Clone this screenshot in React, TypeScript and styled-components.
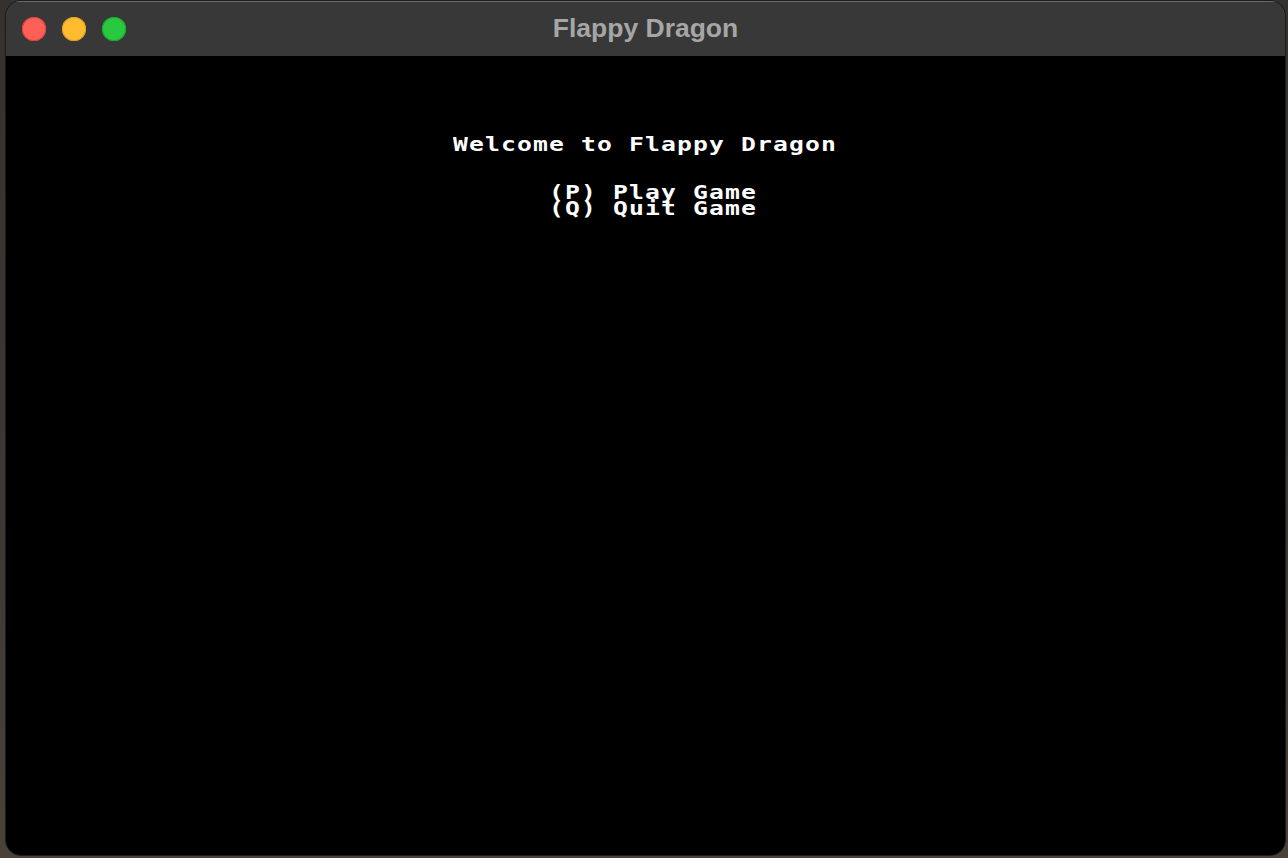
import React from "react";
import styled, { createGlobalStyle } from "styled-components";

const Global = createGlobalStyle`
  html, body { margin: 0; padding: 0; background: #3a3632; }
  #root { width: 1288px; height: 858px; }
`;

const Desktop = styled.div`
  width: 1288px;
  height: 858px;
  box-sizing: border-box;
  padding: 0 2px 2px 5px;
  background: linear-gradient(180deg, #34312e 0%, #3d3833 60%, #4a4238 100%);
  display: flex;
`;

const Window = styled.div`
  flex: 1;
  display: flex;
  flex-direction: column;
  border-radius: 16px;
  overflow: hidden;
  border: 1px solid #1c1c1c;
  box-shadow: inset 0 0 0 1px #5c5c5c;
  background: #000;
`;

const TitleBar = styled.div`
  height: 55px;
  flex: none;
  position: relative;
  display: flex;
  align-items: center;
  justify-content: center;
  background: #383838;
  border-top: 1px solid #6a6a6a;
  box-sizing: border-box;
`;

const Lights = styled.div`
  position: absolute;
  left: 16px;
  top: 15px;
  display: flex;
  gap: 16px;
`;

const Light = styled.span<{ $c: string; $edge: string }>`
  width: 24px;
  height: 24px;
  border-radius: 50%;
  background: ${(p) => p.$c};
  box-shadow: inset 0 0 0 1px ${(p) => p.$edge};
`;

const Title = styled.div`
  font-family: "Liberation Sans", Arial, sans-serif;
  font-weight: 700;
  font-size: 26.5px;
  color: #a6a6a6;
  margin-left: 0;
  margin-top: -2px;
`;

const Console = styled.div`
  flex: 1;
  background: #000;
  display: grid;
  grid-template-columns: repeat(80, 16px);
  grid-template-rows: repeat(50, 16px);
  margin-left: -1px;
`;

const Line = styled.div<{ $row: number; $col: number; $len: number }>`
  grid-row: ${(p) => p.$row + 1};
  grid-column: ${(p) => p.$col + 1} / span ${(p) => p.$len};
  font-family: "DejaVu Sans Mono", "Liberation Mono", monospace;
  font-weight: 700;
  font-size: 19px;
  line-height: 16px;
  letter-spacing: 0.87px;
  color: #fff;
  white-space: pre;
  transform: scaleX(1.3);
  transform-origin: left center;
`;

const lines = [
  { row: 5, text: "Welcome to Flappy Dragon" },
  { row: 8, text: "(P) Play Game", col: 34 },
  { row: 9, text: "(Q) Quit Game", col: 34 },
];

export default function App() {
  return (
    <>
      <Global />
      <Desktop>
        <Window>
          <TitleBar>
            <Lights>
              <Light $c="#fe5f57" $edge="#e0443e" />
              <Light $c="#febc2e" $edge="#dea123" />
              <Light $c="#28c840" $edge="#1aab29" />
            </Lights>
            <Title>Flappy Dragon</Title>
          </TitleBar>
          <Console>
            {lines.map((l) => {
              const col = l.col ?? Math.floor((80 - l.text.length) / 2);
              return (
                <Line key={l.row} $row={l.row} $col={col} $len={l.text.length}>
                  {l.text}
                </Line>
              );
            })}
          </Console>
        </Window>
      </Desktop>
    </>
  );
}
